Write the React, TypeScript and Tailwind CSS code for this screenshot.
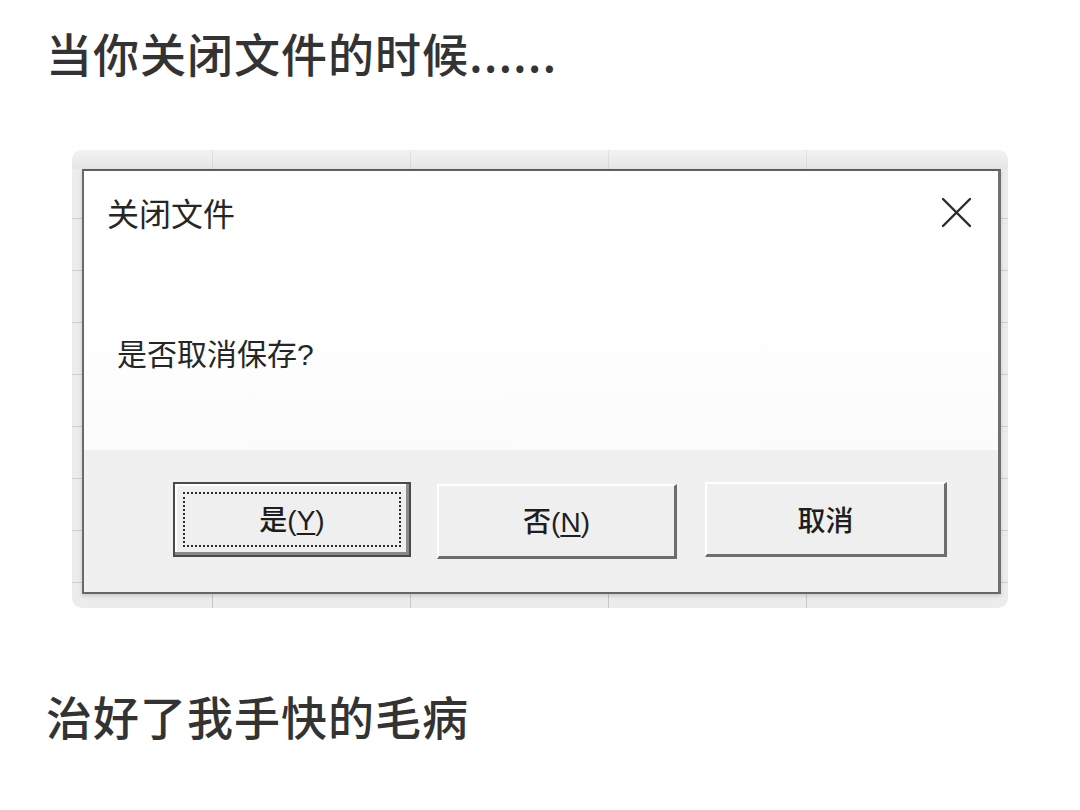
import React from "react";

const cjk = { fontFamily: '"Noto Sans CJK SC", "Noto Sans", sans-serif' };

function CloseIcon() {
  return (
    <svg width="31" height="31" viewBox="0 0 31 31">
      <path d="M2 2 L29 29 M29 2 L2 29" stroke="#2a2a2a" strokeWidth="2.4" strokeLinecap="round" />
    </svg>
  );
}

function Label({ main, hot }: { main: string; hot?: string }) {
  return (
    <span className="text-[28px] leading-[36px] text-[#1e1e1e] font-medium" style={cjk}>
      {main}
      {hot && (
        <span style={{ fontFamily: '"Liberation Sans", Arial, sans-serif' }}>
          (<span className="underline underline-offset-[3px] decoration-[2px]">{hot}</span>)
        </span>
      )}
    </span>
  );
}

export default function App() {
  const colLines = [212, 410, 608, 806];
  const rowLines = [218, 270, 322, 374, 426, 478, 530, 582];
  return (
    <div className="w-[1080px] h-[810px] bg-white overflow-hidden" style={cjk}>
      <div className="pl-[46px] pt-[24px] text-[46px] leading-[56px] font-medium text-[#333333] tracking-[1px]">
        当你关闭文件的时候......
      </div>

      <div className="mt-[70px] ml-[72px] w-[936px] h-[458px] relative rounded-[10px] bg-[#ececec] flex flex-col pt-[19px] pl-[10px] pr-[7px] pb-[14px]">
        {/* spreadsheet grid lines behind the dialog */}
        {colLines.map((x) => (
          <div key={x} className="absolute top-0 bottom-0 w-px bg-[#c8c8c8]" style={{ left: x - 72 }} />
        ))}
        {rowLines.map((y) => (
          <div key={y} className="absolute left-0 right-0 h-px bg-[#cfcfcf]" style={{ top: y - 150 }} />
        ))}
        <div className="absolute left-0 right-0 top-0 h-[19px] rounded-t-[10px] bg-gradient-to-b from-[#f6f6f6] to-[#e2e2e2] opacity-60" />

        <div className="relative flex-1 flex flex-col bg-white border-t-[2px] border-l-[2px] border-b-[2px] border-r-[3px] border-t-[#5e5e5e] border-l-[#6a6a6a] border-b-[#666666] border-r-[#707070] shadow-[0_2px_4px_rgba(0,0,0,0.15)]">
          <div className="h-[279px] flex flex-col bg-gradient-to-b from-white via-white to-[#fbfbfb]">
            <div className="flex items-center justify-between pt-[21px] pl-[23px] pr-[26px]">
              <span className="text-[32px] leading-[40px] text-[#262626]">关闭文件</span>
              <CloseIcon />
            </div>
            <div className="pl-[33px] mt-[100px] text-[30px] leading-[40px] text-[#262626]">
              是否取消保存<span style={{ fontFamily: '"Liberation Sans", Arial, sans-serif' }}>?</span>
            </div>
          </div>

          <div className="flex-1 bg-[#f0f0f0] flex items-start pt-[32px] pl-[89px]">
            <div className="w-[238px] h-[75px] border-2 border-[#4a4a4a] bg-[#efefef] shadow-[inset_-3px_-3px_0_#8a8a8a,inset_2px_2px_0_#ffffff] p-[8px] flex">
              <div className="flex-1 border-2 border-dotted border-[#2a2a2a] flex items-center justify-center">
                <Label main="是" hot="Y" />
              </div>
            </div>
            <div className="ml-[26px] w-[240px] h-[75px] mt-[2px] border-t-2 border-l-2 border-t-white border-l-white border-r-[3px] border-b-[3px] border-r-[#6d6d6d] border-b-[#6d6d6d] bg-[#efefef] flex items-center justify-center">
              <Label main="否" hot="N" />
            </div>
            <div className="ml-[28px] w-[242px] h-[75px] border-t-2 border-l-2 border-t-white border-l-white border-r-[3px] border-b-[3px] border-r-[#6d6d6d] border-b-[#6d6d6d] bg-[#efefef] flex items-center justify-center">
              <Label main="取消" />
            </div>
          </div>
        </div>
      </div>

      <div className="pl-[46px] mt-[79px] text-[46px] leading-[56px] font-medium text-[#333333] tracking-[1px]">
        治好了我手快的毛病
      </div>
    </div>
  );
}
